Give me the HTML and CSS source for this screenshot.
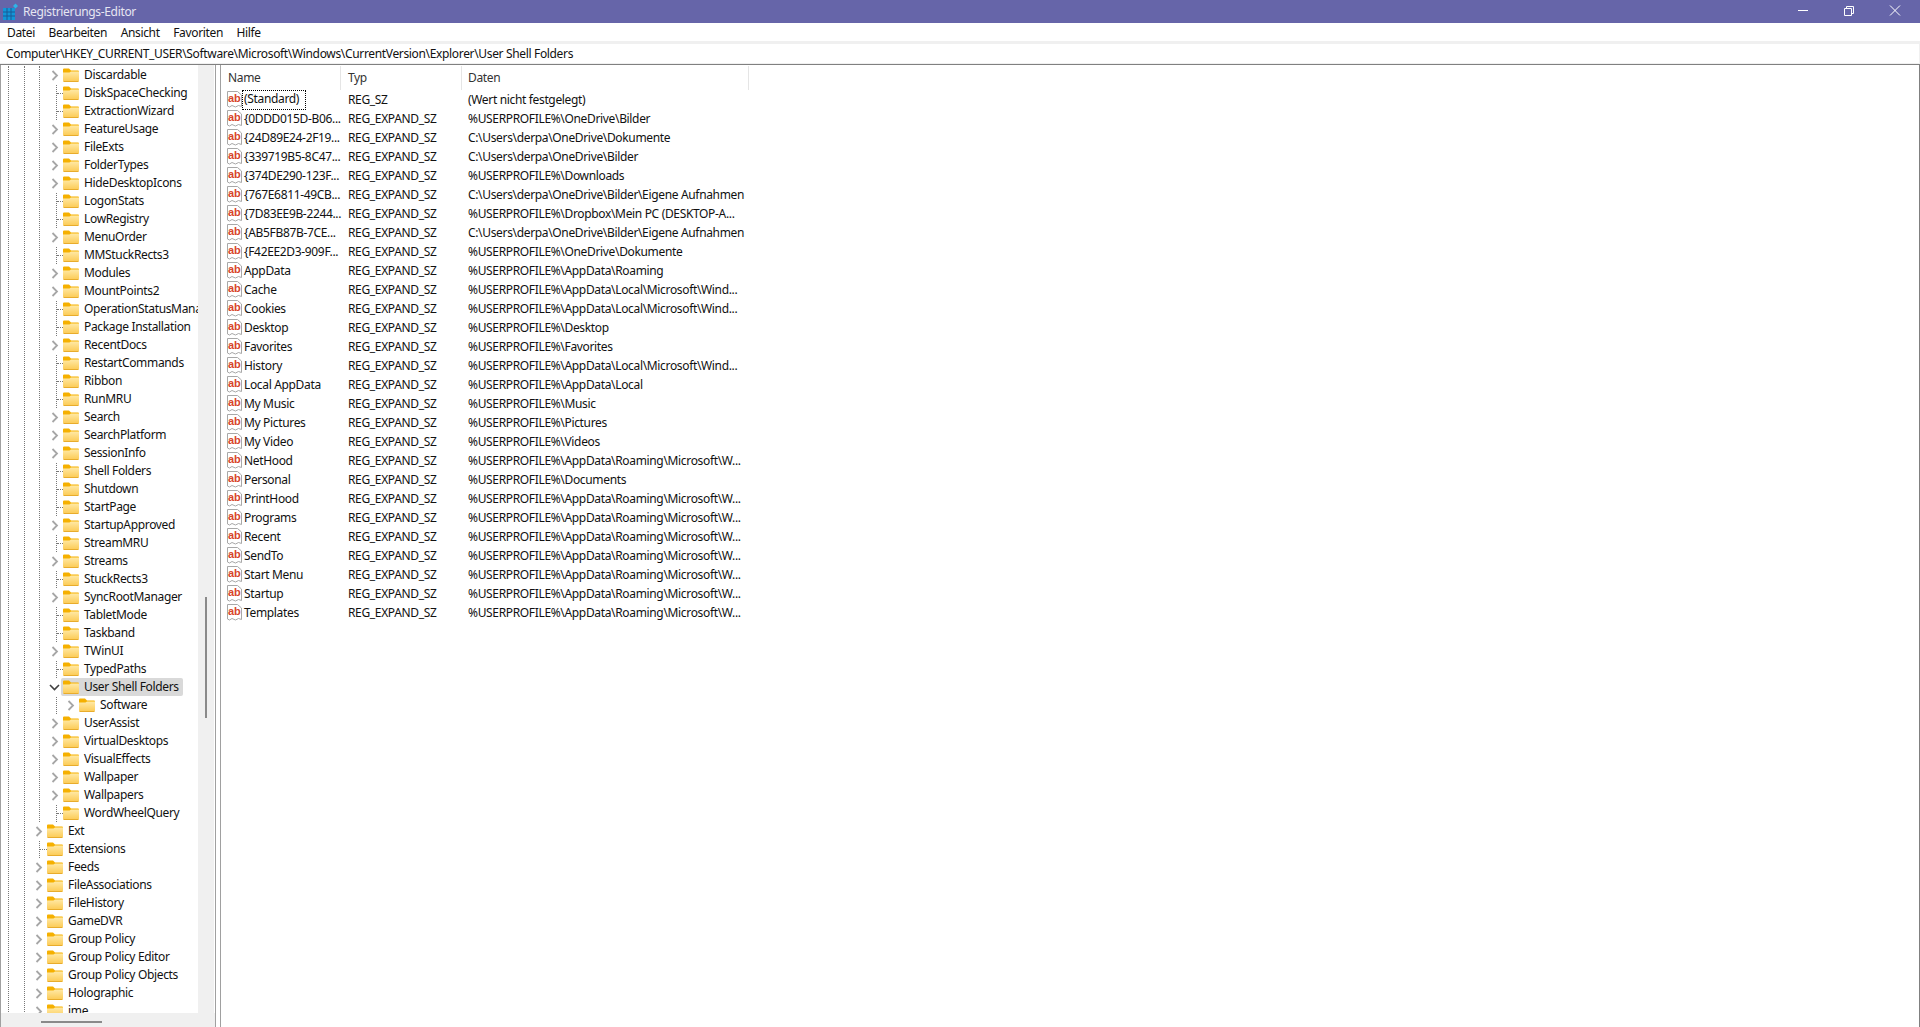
FILE: index.html
```html
<!DOCTYPE html>
<html lang="de">
<head>
    <meta charset="UTF-8">
    <title>Registrierungs-Editor</title>
    <link rel="stylesheet" href="styles.css">
</head>
<body>
<svg class="defs" width="0" height="0">
    <defs>
        <linearGradient id="folder-fill" x1="0" y1="0" x2="0" y2="1">
            <stop offset="0" stop-color="#ffe9a6"/>
            <stop offset="1" stop-color="#fccb55"/>
        </linearGradient>
        <symbol id="folder" viewBox="0 0 16 14">
            <path d="M0 1.5Q0 .5 1 .5H6L8 2.5H15Q16 2.5 16 3.5V5H0Z" fill="#f5b000"/>
            <path d="M0 4.5H6.5L8 3.5H16V12.5Q16 13.5 15 13.5H1Q0 13.5 0 12.5Z" fill="url(#folder-fill)"/>
            <path d="M.5 13.5H15.5" stroke="#e8ac2c" stroke-width="1"/>
        </symbol>
        <symbol id="chev" viewBox="0 0 14 18">
            <path d="M3.5 5L8 9.5L3.5 14" fill="none" stroke="#a6a6a6" stroke-width="1.8"/>
        </symbol>
        <symbol id="chev-open" viewBox="0 0 14 18">
            <path d="M1 7L5.5 11.5L10 7" fill="none" stroke="#404040" stroke-width="1.6"/>
        </symbol>
        <symbol id="ab" viewBox="0 0 15 17">
            <path d="M.5 .5H10.5L14.5 4V15.5L11.5 14.5L8.5 16L5 14.5L2.5 16L.5 15Z" fill="#fff" stroke="#a8a8a8" stroke-width="1"/>
            <text x="1" y="11" class="ab-text">ab</text>
        </symbol>
    </defs>
</svg>

<div class="titlebar">
    <svg class="app-icon" width="17" height="18" viewBox="0 0 17 18">
        <path d="M2 5H14V17H2Z" fill="#1296d8"/>
        <path d="M2 9H14M2 13H14M6 5V17M10 5V17" stroke="#1a5a96" stroke-width="1"/>
        <path d="M12 3L14.5 .5L17 3L14.5 5.5Z" fill="#2fb4e8"/>
    </svg>
    <span class="title-text">Registrierungs-Editor</span>
    <div class="win-buttons">
        <span class="win-btn"><svg width="12" height="12" viewBox="0 0 12 12"><path d="M1 5.5H11" stroke="#fff"/></svg></span>
        <span class="win-btn"><svg width="12" height="12" viewBox="0 0 12 12"><path d="M1.5 3.5H8.5V10.5H1.5ZM3.5 3.5V1.5H10.5V8.5H8.5" fill="none" stroke="#fff"/></svg></span>
        <span class="win-btn"><svg width="12" height="12" viewBox="0 0 12 12"><path d="M1 .5L11 10.5M11 .5L1 10.5" stroke="#fff"/></svg></span>
    </div>
</div>

<div class="menubar">
    <span class="menu-item">Datei</span>
    <span class="menu-item">Bearbeiten</span>
    <span class="menu-item">Ansicht</span>
    <span class="menu-item">Favoriten</span>
    <span class="menu-item">Hilfe</span>
</div>

<div class="addressbar">
    <div class="address">Computer\HKEY_CURRENT_USER\Software\Microsoft\Windows\CurrentVersion\Explorer\User Shell Folders</div>
</div>

<div class="main">
    <div class="tree-pane">
        <div class="tree-top">
            <div class="tree">
                <div class="branch level1"><div class="branch level2"><div class="branch level3">
                    <div class="branch level4">
                        <div class="row"><span class="twist"><svg width="14" height="18"><use href="#chev"/></svg></span><span class="label"><svg class="folder"><use href="#folder"/></svg>Discardable</span></div>
                        <div class="row"><span class="stub"></span><span class="label"><svg class="folder"><use href="#folder"/></svg>DiskSpaceChecking</span></div>
                        <div class="row"><span class="stub"></span><span class="label"><svg class="folder"><use href="#folder"/></svg>ExtractionWizard</span></div>
                        <div class="row"><span class="twist"><svg width="14" height="18"><use href="#chev"/></svg></span><span class="label"><svg class="folder"><use href="#folder"/></svg>FeatureUsage</span></div>
                        <div class="row"><span class="twist"><svg width="14" height="18"><use href="#chev"/></svg></span><span class="label"><svg class="folder"><use href="#folder"/></svg>FileExts</span></div>
                        <div class="row"><span class="twist"><svg width="14" height="18"><use href="#chev"/></svg></span><span class="label"><svg class="folder"><use href="#folder"/></svg>FolderTypes</span></div>
                        <div class="row"><span class="twist"><svg width="14" height="18"><use href="#chev"/></svg></span><span class="label"><svg class="folder"><use href="#folder"/></svg>HideDesktopIcons</span></div>
                        <div class="row"><span class="stub"></span><span class="label"><svg class="folder"><use href="#folder"/></svg>LogonStats</span></div>
                        <div class="row"><span class="stub"></span><span class="label"><svg class="folder"><use href="#folder"/></svg>LowRegistry</span></div>
                        <div class="row"><span class="twist"><svg width="14" height="18"><use href="#chev"/></svg></span><span class="label"><svg class="folder"><use href="#folder"/></svg>MenuOrder</span></div>
                        <div class="row"><span class="stub"></span><span class="label"><svg class="folder"><use href="#folder"/></svg>MMStuckRects3</span></div>
                        <div class="row"><span class="twist"><svg width="14" height="18"><use href="#chev"/></svg></span><span class="label"><svg class="folder"><use href="#folder"/></svg>Modules</span></div>
                        <div class="row"><span class="twist"><svg width="14" height="18"><use href="#chev"/></svg></span><span class="label"><svg class="folder"><use href="#folder"/></svg>MountPoints2</span></div>
                        <div class="row"><span class="stub"></span><span class="label"><svg class="folder"><use href="#folder"/></svg>OperationStatusManager</span></div>
                        <div class="row"><span class="stub"></span><span class="label"><svg class="folder"><use href="#folder"/></svg>Package Installation</span></div>
                        <div class="row"><span class="twist"><svg width="14" height="18"><use href="#chev"/></svg></span><span class="label"><svg class="folder"><use href="#folder"/></svg>RecentDocs</span></div>
                        <div class="row"><span class="stub"></span><span class="label"><svg class="folder"><use href="#folder"/></svg>RestartCommands</span></div>
                        <div class="row"><span class="stub"></span><span class="label"><svg class="folder"><use href="#folder"/></svg>Ribbon</span></div>
                        <div class="row"><span class="stub"></span><span class="label"><svg class="folder"><use href="#folder"/></svg>RunMRU</span></div>
                        <div class="row"><span class="twist"><svg width="14" height="18"><use href="#chev"/></svg></span><span class="label"><svg class="folder"><use href="#folder"/></svg>Search</span></div>
                        <div class="row"><span class="twist"><svg width="14" height="18"><use href="#chev"/></svg></span><span class="label"><svg class="folder"><use href="#folder"/></svg>SearchPlatform</span></div>
                        <div class="row"><span class="twist"><svg width="14" height="18"><use href="#chev"/></svg></span><span class="label"><svg class="folder"><use href="#folder"/></svg>SessionInfo</span></div>
                        <div class="row"><span class="stub"></span><span class="label"><svg class="folder"><use href="#folder"/></svg>Shell Folders</span></div>
                        <div class="row"><span class="stub"></span><span class="label"><svg class="folder"><use href="#folder"/></svg>Shutdown</span></div>
                        <div class="row"><span class="stub"></span><span class="label"><svg class="folder"><use href="#folder"/></svg>StartPage</span></div>
                        <div class="row"><span class="twist"><svg width="14" height="18"><use href="#chev"/></svg></span><span class="label"><svg class="folder"><use href="#folder"/></svg>StartupApproved</span></div>
                        <div class="row"><span class="stub"></span><span class="label"><svg class="folder"><use href="#folder"/></svg>StreamMRU</span></div>
                        <div class="row"><span class="twist"><svg width="14" height="18"><use href="#chev"/></svg></span><span class="label"><svg class="folder"><use href="#folder"/></svg>Streams</span></div>
                        <div class="row"><span class="stub"></span><span class="label"><svg class="folder"><use href="#folder"/></svg>StuckRects3</span></div>
                        <div class="row"><span class="twist"><svg width="14" height="18"><use href="#chev"/></svg></span><span class="label"><svg class="folder"><use href="#folder"/></svg>SyncRootManager</span></div>
                        <div class="row"><span class="stub"></span><span class="label"><svg class="folder"><use href="#folder"/></svg>TabletMode</span></div>
                        <div class="row"><span class="stub"></span><span class="label"><svg class="folder"><use href="#folder"/></svg>Taskband</span></div>
                        <div class="row"><span class="twist"><svg width="14" height="18"><use href="#chev"/></svg></span><span class="label"><svg class="folder"><use href="#folder"/></svg>TWinUI</span></div>
                        <div class="row"><span class="stub"></span><span class="label"><svg class="folder"><use href="#folder"/></svg>TypedPaths</span></div>
                        <div class="row row-selected"><span class="twist"><svg width="14" height="18"><use href="#chev-open"/></svg></span><span class="label"><svg class="folder"><use href="#folder"/></svg>User Shell Folders</span></div>
                        <div class="row row-nested"><span class="twist"><svg width="14" height="18"><use href="#chev"/></svg></span><span class="label"><svg class="folder"><use href="#folder"/></svg>Software</span></div>
                        <div class="row"><span class="twist"><svg width="14" height="18"><use href="#chev"/></svg></span><span class="label"><svg class="folder"><use href="#folder"/></svg>UserAssist</span></div>
                        <div class="row"><span class="twist"><svg width="14" height="18"><use href="#chev"/></svg></span><span class="label"><svg class="folder"><use href="#folder"/></svg>VirtualDesktops</span></div>
                        <div class="row"><span class="twist"><svg width="14" height="18"><use href="#chev"/></svg></span><span class="label"><svg class="folder"><use href="#folder"/></svg>VisualEffects</span></div>
                        <div class="row"><span class="twist"><svg width="14" height="18"><use href="#chev"/></svg></span><span class="label"><svg class="folder"><use href="#folder"/></svg>Wallpaper</span></div>
                        <div class="row"><span class="twist"><svg width="14" height="18"><use href="#chev"/></svg></span><span class="label"><svg class="folder"><use href="#folder"/></svg>Wallpapers</span></div>
                        <div class="row"><span class="stub"></span><span class="label"><svg class="folder"><use href="#folder"/></svg>WordWheelQuery</span></div>
                    </div>
                    <div class="row"><span class="twist"><svg width="14" height="18"><use href="#chev"/></svg></span><span class="label"><svg class="folder"><use href="#folder"/></svg>Ext</span></div>
                    <div class="row"><span class="stub"></span><span class="label"><svg class="folder"><use href="#folder"/></svg>Extensions</span></div>
                    <div class="row"><span class="twist"><svg width="14" height="18"><use href="#chev"/></svg></span><span class="label"><svg class="folder"><use href="#folder"/></svg>Feeds</span></div>
                    <div class="row"><span class="twist"><svg width="14" height="18"><use href="#chev"/></svg></span><span class="label"><svg class="folder"><use href="#folder"/></svg>FileAssociations</span></div>
                    <div class="row"><span class="twist"><svg width="14" height="18"><use href="#chev"/></svg></span><span class="label"><svg class="folder"><use href="#folder"/></svg>FileHistory</span></div>
                    <div class="row"><span class="twist"><svg width="14" height="18"><use href="#chev"/></svg></span><span class="label"><svg class="folder"><use href="#folder"/></svg>GameDVR</span></div>
                    <div class="row"><span class="twist"><svg width="14" height="18"><use href="#chev"/></svg></span><span class="label"><svg class="folder"><use href="#folder"/></svg>Group Policy</span></div>
                    <div class="row"><span class="twist"><svg width="14" height="18"><use href="#chev"/></svg></span><span class="label"><svg class="folder"><use href="#folder"/></svg>Group Policy Editor</span></div>
                    <div class="row"><span class="twist"><svg width="14" height="18"><use href="#chev"/></svg></span><span class="label"><svg class="folder"><use href="#folder"/></svg>Group Policy Objects</span></div>
                    <div class="row"><span class="twist"><svg width="14" height="18"><use href="#chev"/></svg></span><span class="label"><svg class="folder"><use href="#folder"/></svg>Holographic</span></div>
                    <div class="row"><span class="twist"><svg width="14" height="18"><use href="#chev"/></svg></span><span class="label"><svg class="folder"><use href="#folder"/></svg>ime</span></div>
                </div></div></div>
            </div>
            <div class="vbar"><div class="vthumb"></div></div>
        </div>
        <div class="hbar"><div class="hthumb"></div></div>
    </div>

    <div class="list">
        <div class="list-head">
            <div class="head-cell">Name</div>
            <div class="head-cell">Typ</div>
            <div class="head-cell head-data">Daten</div>
        </div>
        <div class="list-row"><div class="cell-name"><svg class="ab-icon"><use href="#ab"/></svg><span class="focused">(Standard)</span></div><div class="cell-type">REG_SZ</div><div class="cell-data">(Wert nicht festgelegt)</div></div>
        <div class="list-row"><div class="cell-name"><svg class="ab-icon"><use href="#ab"/></svg><span>{0DDD015D-B06...</span></div><div class="cell-type">REG_EXPAND_SZ</div><div class="cell-data">%USERPROFILE%\OneDrive\Bilder</div></div>
        <div class="list-row"><div class="cell-name"><svg class="ab-icon"><use href="#ab"/></svg><span>{24D89E24-2F19...</span></div><div class="cell-type">REG_EXPAND_SZ</div><div class="cell-data">C:\Users\derpa\OneDrive\Dokumente</div></div>
        <div class="list-row"><div class="cell-name"><svg class="ab-icon"><use href="#ab"/></svg><span>{339719B5-8C47...</span></div><div class="cell-type">REG_EXPAND_SZ</div><div class="cell-data">C:\Users\derpa\OneDrive\Bilder</div></div>
        <div class="list-row"><div class="cell-name"><svg class="ab-icon"><use href="#ab"/></svg><span>{374DE290-123F...</span></div><div class="cell-type">REG_EXPAND_SZ</div><div class="cell-data">%USERPROFILE%\Downloads</div></div>
        <div class="list-row"><div class="cell-name"><svg class="ab-icon"><use href="#ab"/></svg><span>{767E6811-49CB...</span></div><div class="cell-type">REG_EXPAND_SZ</div><div class="cell-data">C:\Users\derpa\OneDrive\Bilder\Eigene Aufnahmen</div></div>
        <div class="list-row"><div class="cell-name"><svg class="ab-icon"><use href="#ab"/></svg><span>{7D83EE9B-2244...</span></div><div class="cell-type">REG_EXPAND_SZ</div><div class="cell-data">%USERPROFILE%\Dropbox\Mein PC (DESKTOP-A...</div></div>
        <div class="list-row"><div class="cell-name"><svg class="ab-icon"><use href="#ab"/></svg><span>{AB5FB87B-7CE...</span></div><div class="cell-type">REG_EXPAND_SZ</div><div class="cell-data">C:\Users\derpa\OneDrive\Bilder\Eigene Aufnahmen</div></div>
        <div class="list-row"><div class="cell-name"><svg class="ab-icon"><use href="#ab"/></svg><span>{F42EE2D3-909F...</span></div><div class="cell-type">REG_EXPAND_SZ</div><div class="cell-data">%USERPROFILE%\OneDrive\Dokumente</div></div>
        <div class="list-row"><div class="cell-name"><svg class="ab-icon"><use href="#ab"/></svg><span>AppData</span></div><div class="cell-type">REG_EXPAND_SZ</div><div class="cell-data">%USERPROFILE%\AppData\Roaming</div></div>
        <div class="list-row"><div class="cell-name"><svg class="ab-icon"><use href="#ab"/></svg><span>Cache</span></div><div class="cell-type">REG_EXPAND_SZ</div><div class="cell-data">%USERPROFILE%\AppData\Local\Microsoft\Wind...</div></div>
        <div class="list-row"><div class="cell-name"><svg class="ab-icon"><use href="#ab"/></svg><span>Cookies</span></div><div class="cell-type">REG_EXPAND_SZ</div><div class="cell-data">%USERPROFILE%\AppData\Local\Microsoft\Wind...</div></div>
        <div class="list-row"><div class="cell-name"><svg class="ab-icon"><use href="#ab"/></svg><span>Desktop</span></div><div class="cell-type">REG_EXPAND_SZ</div><div class="cell-data">%USERPROFILE%\Desktop</div></div>
        <div class="list-row"><div class="cell-name"><svg class="ab-icon"><use href="#ab"/></svg><span>Favorites</span></div><div class="cell-type">REG_EXPAND_SZ</div><div class="cell-data">%USERPROFILE%\Favorites</div></div>
        <div class="list-row"><div class="cell-name"><svg class="ab-icon"><use href="#ab"/></svg><span>History</span></div><div class="cell-type">REG_EXPAND_SZ</div><div class="cell-data">%USERPROFILE%\AppData\Local\Microsoft\Wind...</div></div>
        <div class="list-row"><div class="cell-name"><svg class="ab-icon"><use href="#ab"/></svg><span>Local AppData</span></div><div class="cell-type">REG_EXPAND_SZ</div><div class="cell-data">%USERPROFILE%\AppData\Local</div></div>
        <div class="list-row"><div class="cell-name"><svg class="ab-icon"><use href="#ab"/></svg><span>My Music</span></div><div class="cell-type">REG_EXPAND_SZ</div><div class="cell-data">%USERPROFILE%\Music</div></div>
        <div class="list-row"><div class="cell-name"><svg class="ab-icon"><use href="#ab"/></svg><span>My Pictures</span></div><div class="cell-type">REG_EXPAND_SZ</div><div class="cell-data">%USERPROFILE%\Pictures</div></div>
        <div class="list-row"><div class="cell-name"><svg class="ab-icon"><use href="#ab"/></svg><span>My Video</span></div><div class="cell-type">REG_EXPAND_SZ</div><div class="cell-data">%USERPROFILE%\Videos</div></div>
        <div class="list-row"><div class="cell-name"><svg class="ab-icon"><use href="#ab"/></svg><span>NetHood</span></div><div class="cell-type">REG_EXPAND_SZ</div><div class="cell-data">%USERPROFILE%\AppData\Roaming\Microsoft\W...</div></div>
        <div class="list-row"><div class="cell-name"><svg class="ab-icon"><use href="#ab"/></svg><span>Personal</span></div><div class="cell-type">REG_EXPAND_SZ</div><div class="cell-data">%USERPROFILE%\Documents</div></div>
        <div class="list-row"><div class="cell-name"><svg class="ab-icon"><use href="#ab"/></svg><span>PrintHood</span></div><div class="cell-type">REG_EXPAND_SZ</div><div class="cell-data">%USERPROFILE%\AppData\Roaming\Microsoft\W...</div></div>
        <div class="list-row"><div class="cell-name"><svg class="ab-icon"><use href="#ab"/></svg><span>Programs</span></div><div class="cell-type">REG_EXPAND_SZ</div><div class="cell-data">%USERPROFILE%\AppData\Roaming\Microsoft\W...</div></div>
        <div class="list-row"><div class="cell-name"><svg class="ab-icon"><use href="#ab"/></svg><span>Recent</span></div><div class="cell-type">REG_EXPAND_SZ</div><div class="cell-data">%USERPROFILE%\AppData\Roaming\Microsoft\W...</div></div>
        <div class="list-row"><div class="cell-name"><svg class="ab-icon"><use href="#ab"/></svg><span>SendTo</span></div><div class="cell-type">REG_EXPAND_SZ</div><div class="cell-data">%USERPROFILE%\AppData\Roaming\Microsoft\W...</div></div>
        <div class="list-row"><div class="cell-name"><svg class="ab-icon"><use href="#ab"/></svg><span>Start Menu</span></div><div class="cell-type">REG_EXPAND_SZ</div><div class="cell-data">%USERPROFILE%\AppData\Roaming\Microsoft\W...</div></div>
        <div class="list-row"><div class="cell-name"><svg class="ab-icon"><use href="#ab"/></svg><span>Startup</span></div><div class="cell-type">REG_EXPAND_SZ</div><div class="cell-data">%USERPROFILE%\AppData\Roaming\Microsoft\W...</div></div>
        <div class="list-row"><div class="cell-name"><svg class="ab-icon"><use href="#ab"/></svg><span>Templates</span></div><div class="cell-type">REG_EXPAND_SZ</div><div class="cell-data">%USERPROFILE%\AppData\Roaming\Microsoft\W...</div></div>
    </div>
</div>
</body>
</html>
```

FILE: styles.css
```css
* {
    margin: 0;
    padding: 0;
    box-sizing: border-box;
}
html, body {
    height: 100%;
    overflow: hidden;
}
body {
    display: flex;
    flex-direction: column;
    background: #fff;
    color: #111;
    font-family: "Noto Sans", "Liberation Sans", sans-serif;
    font-size: 12px;
    line-height: 16px;
    letter-spacing: -0.34px;
}
.defs {
    position: absolute;
}
.ab-text {
    font-family: "Liberation Sans", sans-serif;
    font-size: 11px;
    font-weight: 700;
    fill: #d8452b;
    letter-spacing: 0;
}

/* title + menu */
.titlebar {
    display: flex;
    align-items: center;
    height: 23px;
    padding-left: 1px;
    background: #6665a9;
    color: #e6e6f2;
    flex: none;
}
.app-icon {
    flex: none;
}
.title-text {
    margin-left: 5px;
}
.win-buttons {
    display: flex;
    margin-left: auto;
    padding-right: 2px;
}
.win-btn {
    display: flex;
    justify-content: center;
    width: 46px;
    margin-top: -2px;
}
.menubar {
    display: flex;
    align-items: center;
    gap: 13.5px;
    height: 18px;
    padding: 2px 0 0 7px;
    flex: none;
}
.addressbar {
    height: 24px;
    padding: 3px 1px 1px 0;
    background: #f0f0f0;
    border-bottom: 1px solid #808080;
    flex: none;
}
.address {
    height: 19px;
    padding-left: 6px;
    line-height: 20px;
    background: #fff;
}

/* panes */
.main {
    display: flex;
    flex: 1;
    min-height: 0;
}
.tree-pane {
    display: flex;
    flex-direction: column;
    width: 216px;
    border-left: 1px solid #a0a0a0;
    border-right: 1px solid #a0a0a0;
    flex: none;
}
.tree-top {
    display: flex;
    flex: 1;
    min-height: 0;
}
.tree {
    width: 197px;
    padding-top: 1px;
    overflow: hidden;
}
.vbar {
    width: 16px;
    padding: 532px 0 0 7px;
    background: #f0f0f0;
}
.vthumb {
    width: 2px;
    height: 121px;
    background: #8a8a8a;
}
.hbar {
    height: 14px;
    padding: 8px 0 0 40px;
    background: #f0f0f0;
    flex: none;
}
.hthumb {
    width: 61px;
    height: 2px;
    background: #8a8a8a;
}

/* tree */
.branch {
    border-left: 1px dotted #777;
}
.level1 { margin-left: 7px; }
.level2 { margin-left: 15px; }
.level3 { margin-left: 14px; }
.level4 { margin-left: 16px; }
.row {
    display: flex;
    align-items: center;
    height: 18px;
    white-space: nowrap;
}
.twist {
    display: block;
    width: 14px;
    height: 18px;
    margin-left: -8px;
    background: #fff;
    flex: none;
}
.stub {
    width: 6px;
    border-top: 1px dotted #777;
    flex: none;
}
.level3 > .row .twist {
    margin-left: -7px;
}
.level3 > .row .stub {
    width: 7px;
}
.row-nested {
    padding-left: 16px;
}
.label {
    display: flex;
    align-items: center;
    height: 18px;
    margin-left: -2px;
    padding: 0 4px 0 2px;
    border-radius: 2px;
}
.row-selected .label {
    background: #d9d9d9;
}
.folder {
    width: 16px;
    height: 14px;
    margin-right: 5px;
    flex: none;
}

/* list */
.list {
    flex: 1;
    margin-left: 4px;
    border-left: 1px solid #a0a0a0;
    border-right: 1px solid #808080;
}
.list-head {
    display: grid;
    grid-template-columns: 120px 121px 287px;
    height: 25px;
    padding-top: 1px;
}
.head-cell {
    padding: 4px 0 0 7px;
    border-right: 1px solid #e5e5e5;
    color: #333;
}
.head-data {
    padding-left: 6px;
}
.list-row {
    display: grid;
    grid-template-columns: 120px 121px 287px;
    align-items: center;
    height: 19px;
    white-space: nowrap;
}
.cell-name {
    display: flex;
    align-items: center;
    padding-left: 6px;
}
.ab-icon {
    width: 15px;
    height: 17px;
    margin-right: 2px;
    flex: none;
}
.focused {
    margin: 0 0 0 -1px;
    padding: 0 1px;
    outline: 1px dotted #000;
    outline-offset: 0;
    height: 18px;
    min-width: 62px;
}
.cell-type {
    padding-left: 7px;
}
.cell-data {
    padding-left: 6px;
}
```
